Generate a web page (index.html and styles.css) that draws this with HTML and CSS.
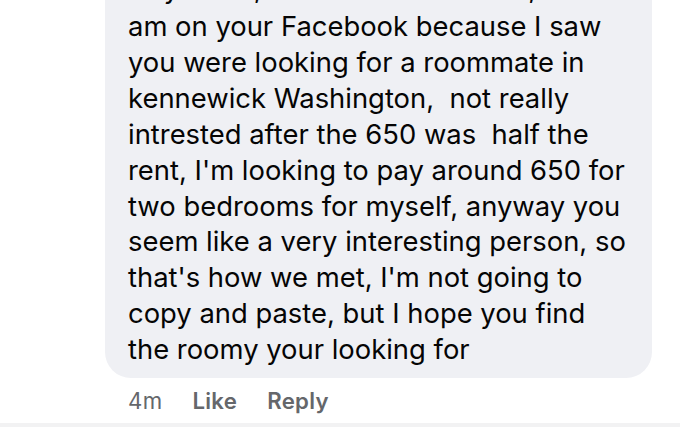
FILE: index.html
```html
<!DOCTYPE html>
<html>
<head>
<meta charset="utf-8">
<link rel="stylesheet" href="styles.css">
</head>
<body>
<div class="comment">
  <div class="bubble">
    <p class="text"><span class="first">Hey there, it's Tom from the ad, I</span>am on your Facebook because I saw
you were looking for a roommate in
kennewick Washington,  not really
intrested after the 650 was  half the
rent, I'm looking to pay around 650 for
two bedrooms for myself, anyway you
seem like a very interesting person, so
that's how we met, I'm not going to
copy and paste, but I hope you find
the roomy your looking for</p>
  </div>
  <div class="actions">
    <span class="time">4m</span>
    <span class="act">Like</span>
    <span class="act">Reply</span>
  </div>
</div>
<div class="strip"></div>
</body>
</html>
```
FILE: styles.css
```css
html, body {
  margin: 0;
  padding: 0;
  background: #ffffff;
  width: 680px;
  height: 427px;
  overflow: hidden;
}
.comment {
  padding-left: 105px;
  width: 547px;
}
.bubble {
  background: #eff0f4;
  border-radius: 26px;
  margin-top: -32px;
  padding: 0 10px 10px 23px;
}
.text {
  margin: 0;
  white-space: pre;
  font-family: Inter, "Liberation Sans", sans-serif;
  font-size: 27.4px;
  line-height: 35.9px;
  color: #050505;
}
.first {
  display: block;
  line-height: 41px;
}
.actions {
  display: flex;
  gap: 30px;
  padding: 8px 0 0 23px;
  font-family: Inter, "Liberation Sans", sans-serif;
  font-size: 22.2px;
  letter-spacing: 0.3px;
  line-height: 30px;
  color: #65676b;
}
.act {
  font-weight: 600;
}
.strip {
  position: absolute;
  left: 0;
  right: 0;
  bottom: 0;
  height: 4px;
  background: #f2f2f3;
}
```
